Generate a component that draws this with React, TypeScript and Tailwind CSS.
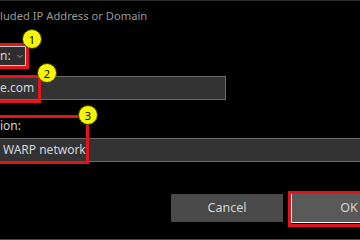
import React from 'react';

// Callout number badge laid over the dialog
const Badge: React.FC<{ n: string; className: string }> = ({ n, className }) => (
  <div
    className={`absolute w-[20px] h-[20px] rounded-full bg-[#f7f700] border border-[#3a3a00] flex items-center justify-center text-[11px] leading-none text-black ${className}`}
  >
    {n}
  </div>
);

const App: React.FC = () => {
  return (
    <div
      className="relative w-[360px] h-[240px] overflow-hidden bg-black border-t border-[#2c2c2c]"
      style={{ fontFamily: '"Noto Sans", "Open Sans", sans-serif' }}
    >
      <div className="flex flex-col pt-[6px]">
        <div className="text-[11.2px] leading-[18px] text-[#9a9a9a]">luded IP Address or Domain</div>

        {/* Type selector */}
        <div className="mt-[21px] w-[26px] h-[20px] bg-[#2e2e2e] border border-[#c8c8c8] border-l-0 flex items-center text-[12px] text-[#d8d8d8]">
          <span>n:</span>
          <svg width="8" height="8" viewBox="0 0 8 8" className="ml-[5px]">
            <path d="M1.5 3 L4 5.5 L6.5 3" fill="none" stroke="#9a9a9a" strokeWidth="1" />
          </svg>
        </div>

        {/* Value input */}
        <div className="mt-[10px] w-[226px] h-[24px] bg-[#333333] border border-[#6b6b6b] border-l-0 flex items-center text-[12px] text-[#d6d6d6]">
          e.com
        </div>

        <div className="mt-[18px] text-[12px] leading-[16px] text-[#d6d6d6]">ion:</div>

        {/* Description input */}
        <div className="mt-[4px] w-[360px] h-[24px] bg-[#333333] border-y border-[#6b6b6b] flex items-center pl-[3px] text-[12px] text-[#d6d6d6]">
          WARP network
        </div>

        {/* Buttons */}
        <div className="mt-[31px] flex items-center pl-[171px] gap-[8px]">
          <div className="shrink-0 w-[112px] h-[28px] bg-[#4a4a4a] flex items-center justify-center text-[12.5px] text-[#d4d4d4]">
            Cancel
          </div>
          <div className="shrink-0 w-[116px] h-[30px] bg-[#595959] border border-white flex items-center justify-center text-[12.5px] text-[#d4d4d4]">
            OK
          </div>
        </div>
      </div>

      <div className="absolute left-0 top-[238px] w-[360px] h-px bg-[#4a4a4a]" />

      {/* Red callout boxes */}
      <div className="absolute left-[-3px] top-[42px] w-[32px] h-[26px] border-[3px] border-[#e4141b]" />
      <div className="absolute left-[-3px] top-[74px] w-[44px] h-[28px] border-[3px] border-[#e4141b]" />
      <div className="absolute left-[-3px] top-[114px] w-[92px] h-[49px] border-[3px] border-[#e4141b]" />
      <div className="absolute left-[288px] top-[190px] w-[120px] h-[36px] border-[3px] border-[#e4141b]" />

      <Badge n="1" className="left-[22px] top-[28px]" />
      <Badge n="2" className="left-[37px] top-[62px]" />
      <Badge n="3" className="left-[78px] top-[104px]" />
    </div>
  );
};

export default App;
